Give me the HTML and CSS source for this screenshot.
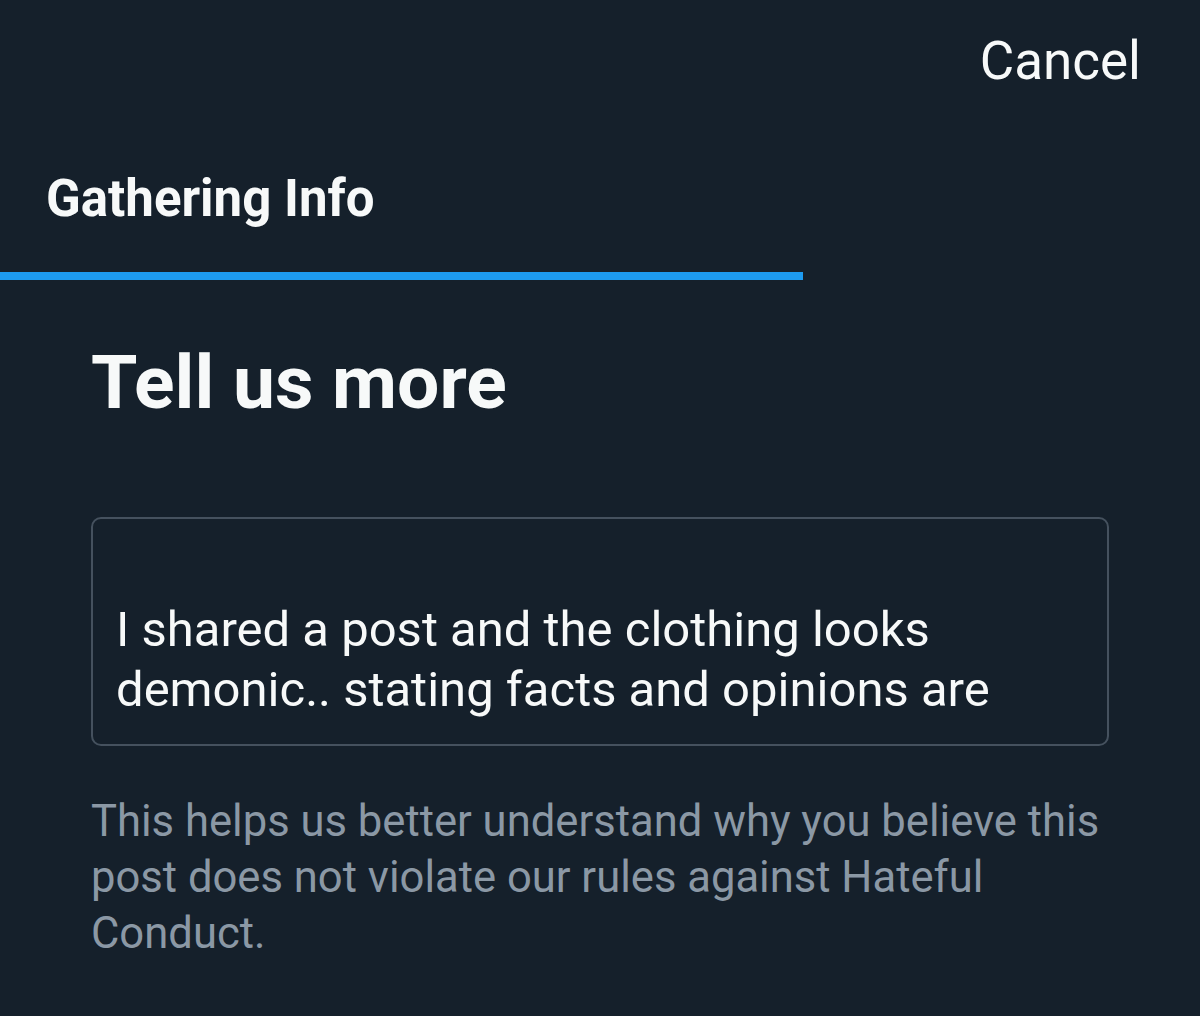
FILE: index.html
```html
<!DOCTYPE html>
<html lang="en">
<head>
<meta charset="utf-8">
<link rel="stylesheet" href="styles.css">
</head>
<body>
<div class="screen">
  <div class="topbar">
    <span class="cancel">Cancel</span>
  </div>
  <div class="tabbar">
    <div class="tab">Gathering Info</div>
  </div>
  <div class="progress"><div class="progress-fill"></div></div>
  <main class="content">
    <h1 class="title">Tell us more</h1>
    <div class="field">
      <p class="field-text">I shared a post and the clothing looks demonic.. stating facts and opinions are</p>
    </div>
    <p class="help">This helps us better understand why you believe this post does not violate our rules against Hateful Conduct.</p>
  </main>
</div>
</body>
</html>
```
FILE: styles.css
```css
html, body {
  margin: 0;
  padding: 0;
  background: #15202b;
}
.screen {
  width: 1200px;
  height: 1016px;
  overflow: hidden;
  font-family: Roboto, "Liberation Sans", sans-serif;
  color: #f7f9f9;
  display: flex;
  flex-direction: column;
}
.topbar {
  display: flex;
  justify-content: flex-end;
  padding: 29px 59px 0 0;
  height: 71px;
}
.cancel {
  font-size: 53px;
  line-height: 64px;
}
.tabbar {
  padding: 69px 0 0 46px;
  height: 103px;
}
.tab {
  font-size: 51px;
  font-weight: 700;
  line-height: 60px;
}
.progress {
  height: 8px;
  width: 1200px;
}
.progress-fill {
  width: 803px;
  height: 8px;
  background: #1d9bf0;
}
.content {
  padding: 0 91px;
}
.title {
  margin: 57px 0 0 0;
  font-size: 75px;
  font-weight: 700;
  line-height: 90px;
}
.field {
  margin-top: 90px;
  height: 229px;
  border: 2px solid #45515e;
  border-radius: 10px;
  box-sizing: border-box;
  display: flex;
  align-items: flex-end;
  padding: 0 24px 24px 23px;
}
.field-text {
  margin: 0;
  font-size: 49px;
  line-height: 60px;
}
.help {
  margin: 48px 0 0 0;
  color: #8b98a5;
  font-size: 43.6px;
  line-height: 56px;
}
```
